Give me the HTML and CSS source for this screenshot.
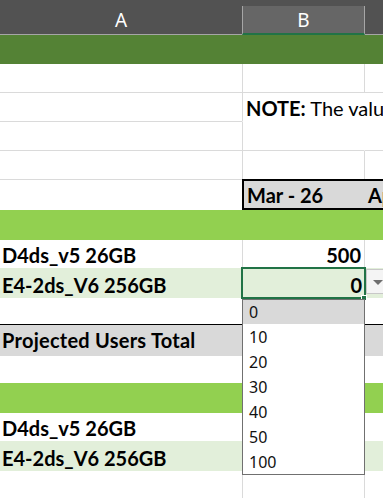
FILE: index.html
```html
<!DOCTYPE html>
<html lang="en">
<head>
<meta charset="utf-8">
<title>Sheet</title>
<link rel="stylesheet" href="styles.css">
</head>
<body>
<div class="sheet">
  <div class="hdr">
    <div class="hdr-strip"></div>
    <div class="hdr-row">
      <div class="hc hc-a">A</div>
      <div class="hc hc-b">B</div>
      <div class="hc hc-c"></div>
    </div>
  </div>

  <div class="row r29 dark"><div class="cell a"></div><div class="cell b"></div><div class="cell c"></div></div>
  <div class="row r29 grid"><div class="cell a"></div><div class="cell b"></div><div class="cell c"></div></div>
  <div class="row r29 grid note-row">
    <div class="cell a"></div>
    <div class="cell b nb nr"><span class="txt"><b>NOTE:</b> The values shown below are estimates</span></div>
    <div class="cell c nb"></div>
  </div>
  <div class="row r29 grid"><div class="cell a"></div><div class="cell b nr"></div><div class="cell c"></div></div>
  <div class="row r29 grid"><div class="cell a"></div><div class="cell b"></div><div class="cell c"></div></div>

  <div class="row r30 month-row">
    <div class="cell a"></div>
    <div class="month-box">
      <div class="mcell">Mar - 26</div>
      <div class="mcell">Apr - 26</div>
    </div>
  </div>

  <div class="row r30 light"><div class="cell a"></div><div class="cell b"></div><div class="cell c"></div></div>
  <div class="row r28 plain"><div class="cell a bold">D4ds_v5 26GB</div><div class="cell b bold num">500</div><div class="cell c"></div></div>
  <div class="row r30 tint"><div class="cell a bold">E4-2ds_V6 256GB</div><div class="cell b bold num">0</div><div class="cell c"></div></div>
  <div class="row r26 plain"><div class="cell a"></div><div class="cell b"></div><div class="cell c"></div></div>
  <div class="row r32 total"><div class="cell a bold wide">Projected Users Total</div><div class="cell b"></div><div class="cell c"></div></div>
  <div class="row r27 plain"><div class="cell a"></div><div class="cell b"></div><div class="cell c"></div></div>
  <div class="row r30 light"><div class="cell a"></div><div class="cell b"></div><div class="cell c"></div></div>
  <div class="row r28 plain"><div class="cell a bold">D4ds_v5 26GB</div><div class="cell b bold num">500</div><div class="cell c"></div></div>
  <div class="row r30 tint"><div class="cell a bold">E4-2ds_V6 256GB</div><div class="cell b bold num">0</div><div class="cell c"></div></div>
  <div class="row r29 plain"><div class="cell a"></div><div class="cell b"></div><div class="cell c"></div></div>

  <div class="selection"></div>
  <div class="fill-handle"></div>
  <div class="dd-btn"><svg width="10" height="5" viewBox="0 0 10 5"><path d="M0 0 L10 0 L5 5 Z" fill="#6e6e6e"/></svg></div>
  <ul class="dd-list">
    <li class="dd-item active">0</li>
    <li class="dd-item">10</li>
    <li class="dd-item">20</li>
    <li class="dd-item">30</li>
    <li class="dd-item">40</li>
    <li class="dd-item">50</li>
    <li class="dd-item">100</li>
  </ul>
</div>
</body>
</html>
```

FILE: styles.css
```css
html, body {
  margin: 0;
  padding: 0;
  overflow: hidden;
  background: #ffffff;
}

.sheet {
  position: relative;
  width: 383px;
  height: 498px;
  overflow: hidden;
  font-family: Lato, "Liberation Sans", sans-serif;
  font-size: 20px;
  color: #000;
}

/* column header */
.hdr {
  background: #525252;
  height: 35px;
  box-sizing: border-box;
}
.hdr-strip { height: 6px; }
.hdr-row {
  display: grid;
  grid-template-columns: 242px 123px 1fr;
  height: 29px;
  box-sizing: border-box;
  border-bottom: 1px solid #a6a6a6;
}
.hc {
  display: flex;
  align-items: center;
  justify-content: center;
  color: #ffffff;
  font-family: "Noto Sans", "Open Sans", sans-serif;
  font-size: 19px;
  line-height: 1;
}
.hc-b {
  background: #666666;
  border-left: 1px solid #a6a6a6;
  border-right: 1px solid #a6a6a6;
  border-bottom: 2px solid #217346;
  margin-bottom: -1px;
  padding-top: 1px;
}

/* rows */
.row {
  display: grid;
  grid-template-columns: 242px 123px 1fr;
  box-sizing: border-box;
}
.r26 { height: 26px; }
.r27 { height: 27px; }
.r28 { height: 28px; }
.r29 { height: 29px; }
.r30 { height: 30px; }
.r32 { height: 32px; }

.cell {
  box-sizing: border-box;
  display: flex;
  align-items: flex-end;
  white-space: nowrap;
  line-height: 20px;
  padding: 0 3px 3px 2px;
  min-width: 0;
}
.cell.b { padding-left: 3px; }
.bold { font-weight: 700; }
.num { justify-content: flex-end; }
.wide { overflow: visible; }

.grid .cell { border-bottom: 1px solid #dadada; }
.grid .cell.b,
.plain .cell.b {
  border-left: 1px solid #dadada;
  border-right: 1px solid #dadada;
}
.grid .cell.nb { border-bottom-color: transparent; }
.grid .cell.nr { border-right-color: transparent; }

.note-row .txt {
  position: relative;
  z-index: 1;
}
.note-row .cell.b { overflow: visible; }

.dark { background: #548235; }
.light { background: #92d050; }
.tint { background: #e2efda; }
.tint .cell.b { border-left: 1px solid transparent; }

.total {
  background: #d9d9d9;
  border-top: 1px solid #000;
}
.total .cell { padding-bottom: 6px; }
.total .cell.a { letter-spacing: 0.25px; }

/* month header box */
.month-box {
  grid-column: 2 / 4;
  margin-top: -1px;
  height: 31px;
  box-sizing: border-box;
  border: 2px solid #000;
  border-right: 0;
  background: #d9d9d9;
  display: grid;
  grid-template-columns: 121px 1fr;
  font-weight: 700;
}
.mcell {
  display: flex;
  align-items: flex-end;
  white-space: nowrap;
  line-height: 20px;
  padding: 0 0 3px 3px;
}

/* overlays */
.selection {
  position: absolute;
  left: 241px;
  top: 267px;
  width: 125px;
  height: 32px;
  box-sizing: border-box;
  border: 2px solid #217346;
}
.fill-handle {
  position: absolute;
  left: 361px;
  top: 295px;
  width: 6px;
  height: 6px;
  box-sizing: border-box;
  background: #217346;
  border: 1px solid #ffffff;
}
.dd-btn {
  position: absolute;
  left: 366px;
  top: 269px;
  width: 22px;
  height: 25px;
  box-sizing: border-box;
  background: #f4f4f4;
  border: 1px solid #c8c8c8;
  display: flex;
  align-items: center;
  padding-left: 6px;
  padding-top: 1px;
}
.dd-btn svg { display: block; }

.dd-list {
  position: absolute;
  left: 242px;
  top: 299px;
  width: 123px;
  margin: 0;
  padding: 0;
  list-style: none;
  box-sizing: border-box;
  border: 1px solid #707070;
  background: #ffffff;
  font-family: "Noto Sans", "Open Sans", sans-serif;
  font-size: 16px;
}
.dd-item {
  height: 25px;
  display: flex;
  align-items: center;
  padding-left: 6px;
  color: #111;
}
.dd-item.active {
  background: #d9d9d9;
  height: 24px;
}
```
